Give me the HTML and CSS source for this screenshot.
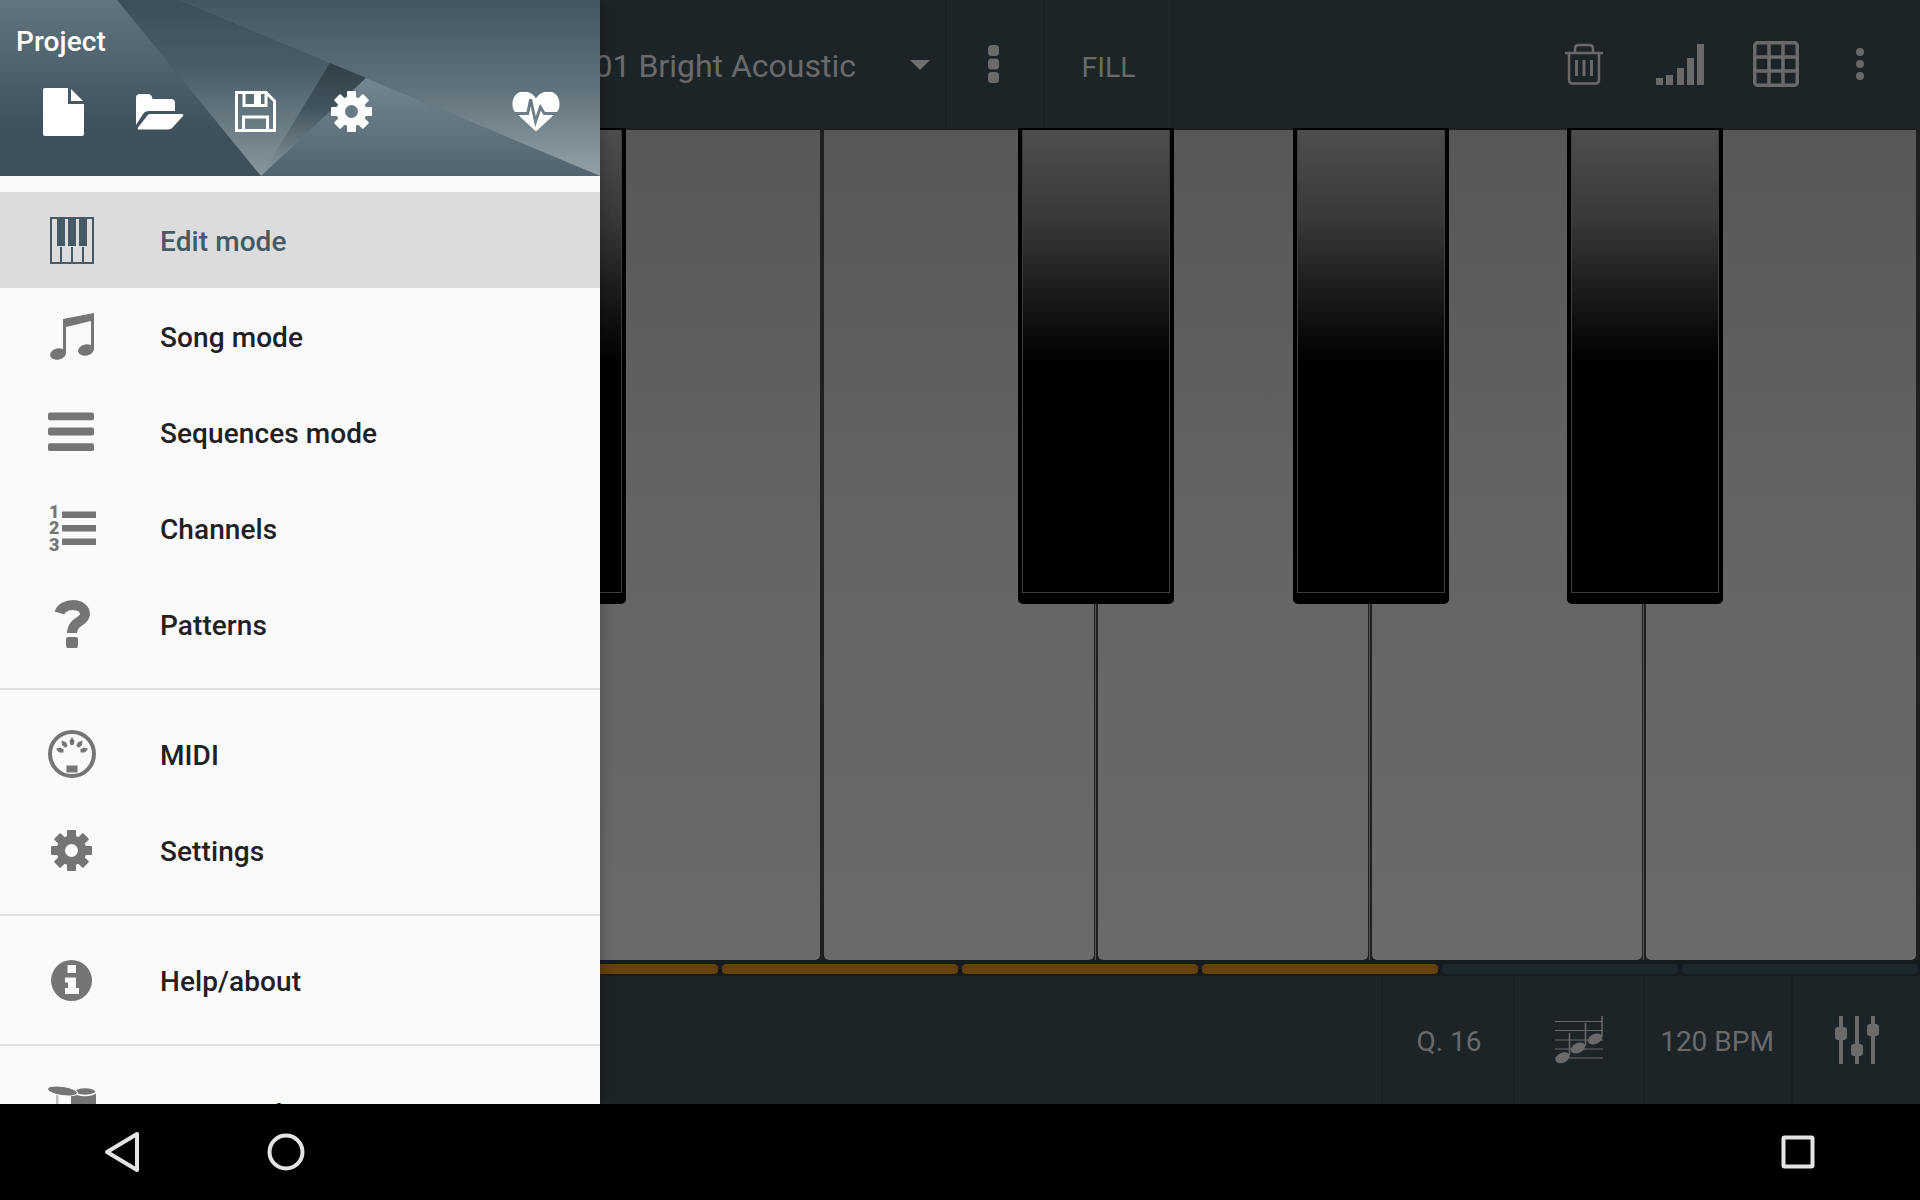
FILE: index.html
```html
<!DOCTYPE html>
<html lang="en">
<head>
<meta charset="utf-8">
<title>Project</title>
<link rel="stylesheet" href="styles.css">
</head>
<body>
<svg class="defs" width="0" height="0" aria-hidden="true">
  <defs>
    <symbol id="gear" viewBox="0 0 41 41">
      <circle cx="20.5" cy="20.5" r="10.75" fill="none" stroke="currentColor" stroke-width="8.5"/>
      <g fill="currentColor">
        <rect x="16" y="0" width="9" height="9" rx="1"/>
        <rect x="16" y="0" width="9" height="9" rx="1" transform="rotate(45 20.5 20.5)"/>
        <rect x="16" y="0" width="9" height="9" rx="1" transform="rotate(90 20.5 20.5)"/>
        <rect x="16" y="0" width="9" height="9" rx="1" transform="rotate(135 20.5 20.5)"/>
        <rect x="16" y="0" width="9" height="9" rx="1" transform="rotate(180 20.5 20.5)"/>
        <rect x="16" y="0" width="9" height="9" rx="1" transform="rotate(225 20.5 20.5)"/>
        <rect x="16" y="0" width="9" height="9" rx="1" transform="rotate(270 20.5 20.5)"/>
        <rect x="16" y="0" width="9" height="9" rx="1" transform="rotate(315 20.5 20.5)"/>
      </g>
    </symbol>
    <linearGradient id="gLeft" gradientUnits="userSpaceOnUse" x1="0" y1="0" x2="0" y2="176">
      <stop offset="0" stop-color="#62757f"/><stop offset=".72" stop-color="#3f515b"/><stop offset="1" stop-color="#3e505a"/>
    </linearGradient>
    <linearGradient id="gMid" gradientUnits="userSpaceOnUse" x1="0" y1="0" x2="0" y2="176">
      <stop offset="0" stop-color="#3c4f59"/><stop offset=".4" stop-color="#4b5e68"/><stop offset="1" stop-color="#87979e"/>
    </linearGradient>
    <linearGradient id="gTop" gradientUnits="userSpaceOnUse" x1="0" y1="0" x2="0" y2="176">
      <stop offset="0" stop-color="#43565f"/><stop offset=".5" stop-color="#5f717a"/><stop offset="1" stop-color="#93a2a9"/>
    </linearGradient>
    <linearGradient id="gWedge" gradientUnits="userSpaceOnUse" x1="0" y1="63" x2="0" y2="176">
      <stop offset="0" stop-color="#2f3f48"/><stop offset=".4" stop-color="#41535c"/><stop offset="1" stop-color="#8a9aa1"/>
    </linearGradient>
    <linearGradient id="gLow" gradientUnits="userSpaceOnUse" x1="0" y1="78" x2="0" y2="176">
      <stop offset="0" stop-color="#74868f"/><stop offset="1" stop-color="#51646e"/>
    </linearGradient>
    <mask id="pulse" maskUnits="userSpaceOnUse" x="0" y="0" width="49" height="41">
      <rect width="49" height="41" fill="#fff"/>
      <path d="M0 22.500H16L19 8 24 31 29 16 33 22.500H49" fill="none" stroke="#000" stroke-width="3"/>
    </mask>
  </defs>
</svg>

<div class="screen">
  <main class="app">
    <header class="bar topbar">
      <div class="instrument">
        <span class="instrument-name">01 Bright Acoustic</span>
        <span class="caret"></span>
      </div>
      <div class="cell cell-dots">
        <svg width="11" height="38" viewBox="0 0 11 38" fill="currentColor">
          <rect width="11" height="11" rx="3.500"/><rect y="13.500" width="11" height="11" rx="3.500"/><rect y="27" width="11" height="11" rx="3.500"/>
        </svg>
      </div>
      <div class="cell cell-fill">FILL</div>
      <div class="tools">
        <div class="tool">
          <svg width="38" height="42" viewBox="0 0 38 42" fill="none" stroke="currentColor" stroke-width="2.500">
            <path d="M0 10H38M10 10V6Q10 2 14 2H24Q28 2 28 6V10M4 10V37Q4 40.500 7.500 40.500H30.500Q34 40.500 34 37V10"/>
            <path d="M11.500 17V33M19 17V33M26.500 17V33" stroke-width="3"/>
          </svg>
        </div>
        <div class="tool">
          <svg width="48" height="41" viewBox="0 0 48 41" fill="currentColor">
            <rect x="0" y="34" width="7" height="7"/><rect x="10" y="31" width="7" height="10"/><rect x="21" y="24" width="7" height="17"/><rect x="31" y="14" width="7" height="27"/><rect x="41" y="0" width="7" height="41"/>
          </svg>
        </div>
        <div class="tool">
          <svg width="46" height="46" viewBox="0 0 46 46" fill="none" stroke="currentColor" stroke-width="3.500">
            <rect x="1.750" y="1.750" width="42.500" height="42.500" rx="3"/>
            <path d="M16 2V44M30 2V44M2 16H44M2 30H44"/>
          </svg>
        </div>
        <div class="tool tool-narrow">
          <svg width="8" height="32" viewBox="0 0 8 32" fill="currentColor">
            <circle cx="4" cy="4" r="4"/><circle cx="4" cy="16" r="4"/><circle cx="4" cy="28" r="4"/>
          </svg>
        </div>
      </div>
    </header>

    <section class="keyboard">
      <div class="key"></div>
      <div class="key"></div>
      <div class="key"></div>
      <div class="key"></div>
      <div class="key key-lined"></div>
      <div class="key key-lined"></div>
      <div class="key key-lined"></div>
      <div class="black black-2"><div class="black-face"></div></div>
      <div class="black black-4"><div class="black-face"></div></div>
      <div class="black black-5"><div class="black-face"></div></div>
      <div class="black black-6"><div class="black-face"></div></div>
    </section>

    <div class="progress">
      <span class="seg"></span><span class="seg"></span>
      <span class="seg seg-on"></span><span class="seg seg-on"></span><span class="seg seg-on"></span><span class="seg seg-on"></span>
      <span class="seg"></span><span class="seg"></span>
    </div>

    <footer class="bar bottombar">
      <div class="cell cell-q cell-text cell-first">Q. 16</div>
      <div class="cell cell-q">
        <svg width="48" height="48" viewBox="0 0 48 48" fill="currentColor">
          <path d="M0 5.500H48M0 14.500H48M0 24H48M0 33H48M0 42H48" stroke="currentColor" stroke-width="1" fill="none"/>
          <ellipse cx="7.500" cy="41.700" rx="7.500" ry="5" transform="rotate(-25 7.500 41.700)"/>
          <ellipse cx="23" cy="32" rx="7.500" ry="5" transform="rotate(-25 23 32)"/>
          <ellipse cx="40" cy="23" rx="7.500" ry="5" transform="rotate(-25 40 23)"/>
          <path d="M14.500 17V39M30.500 7V30M47 0V21" stroke="currentColor" stroke-width="1.500" fill="none"/>
        </svg>
      </div>
      <div class="cell cell-bpm cell-text">120 BPM</div>
      <div class="cell cell-mix">
        <svg width="44" height="48" viewBox="0 0 44 48" fill="currentColor">
          <rect x="4" width="4" height="48"/><rect x="20" width="4" height="48"/><rect x="36" width="4" height="48"/>
          <rect x="0" y="11" width="12" height="13" rx="3"/><rect x="16" y="28" width="12" height="12" rx="3"/><rect x="32" y="8" width="12" height="12" rx="3"/>
        </svg>
      </div>
    </footer>
  </main>

  <nav class="navbar">
    <div class="nav-btn">
      <svg width="36" height="42" viewBox="0 0 36 42" fill="none" stroke="#e4e4e4" stroke-width="4" stroke-linejoin="round">
        <path d="M33 3V39L3 21Z"/>
      </svg>
    </div>
    <div class="nav-btn">
      <svg width="40" height="40" viewBox="0 0 40 40" fill="none" stroke="#e4e4e4" stroke-width="4">
        <circle cx="20" cy="20" r="16.500"/>
      </svg>
    </div>
    <div class="nav-btn nav-btn-end">
      <svg width="34" height="34" viewBox="0 0 34 34" fill="none" stroke="#e4e4e4" stroke-width="4" stroke-linejoin="round">
        <rect x="2.500" y="2.500" width="29" height="29" rx="1"/>
      </svg>
    </div>
  </nav>

  <aside class="drawer">
    <div class="drawer-head">
      <svg class="drawer-art" width="600" height="176" viewBox="0 0 600 176">
        <rect width="600" height="176" fill="url(#gLeft)"/>
        <path d="M117 0H180L600 176H261Z" fill="url(#gMid)"/>
        <path d="M180 0H600V176Z" fill="url(#gTop)"/>
        <path d="M330 63L366 78 261 176Z" fill="url(#gWedge)"/>
        <path d="M366 78L600 176H261Z" fill="url(#gLow)"/>
      </svg>
      <div class="drawer-title">Project</div>
      <div class="drawer-actions">
        <div class="action">
          <svg width="41" height="48" viewBox="0 0 41 48" fill="#fff">
            <path d="M2 0H25V16H41V46Q41 48 39 48H2Q0 48 0 46V2Q0 0 2 0Z"/><path d="M28 1L40 13H28Z"/>
          </svg>
        </div>
        <div class="action action-folder">
          <svg width="48" height="36" viewBox="0 0 48 36" fill="#fff">
            <path d="M0 4Q0 0 4 0H12Q15 0 16 3L16.500 5H35Q39 5 39 9V17H13Q9 17 7 20L0 31Z"/>
            <path d="M14 20H46Q48 20 47 22L37 33Q35 35.600 32 35.600H3Q1 35.600 2 33.600L11 22Q12 20 14 20Z"/>
          </svg>
        </div>
        <div class="action">
          <svg class="icon-raise" width="41" height="41" viewBox="0 0 41 41" fill="none" stroke="#fff" stroke-width="3">
            <path d="M1.500 1.500H31L39.500 10V39.500H1.500Z"/>
            <path d="M9 2V14.500H31V2"/>
            <path d="M8.500 39V26H32.500V39"/>
            <rect x="19" y="3" width="7" height="10" fill="#fff" stroke="none"/>
          </svg>
        </div>
        <div class="action"><svg class="gear-white icon-raise" width="41" height="41"><use href="#gear"/></svg></div>
        <div class="action action-end">
          <svg class="icon-raise" width="49" height="41" viewBox="0 0 49 41" fill="#fff">
            <path mask="url(#pulse)" d="M24.500 41L3 21C-2 15 0 0 12 0 18 0 22 3 24.500 7 27 3 31 0 37 0 49 0 51 15 46 21Z"/>
          </svg>
        </div>
      </div>
    </div>

    <div class="menu-group">
      <div class="menu-row menu-row-active">
        <span class="menu-icon">
          <svg width="44" height="47" viewBox="0 0 44 47" fill="none" stroke="currentColor" stroke-width="2">
            <rect x="1" y="1" width="42" height="45"/>
            <path d="M11 30V46M22 30V46M33 30V46"/>
            <path d="M7 1H15V29H7ZM18 1H26V29H18ZM29 1H37V29H29Z" fill="currentColor" stroke="none"/>
          </svg>
        </span>
        <span class="menu-label">Edit mode</span>
      </div>
      <div class="menu-row">
        <span class="menu-icon">
          <svg width="44" height="47" viewBox="0 0 44 47" fill="currentColor">
            <path d="M13 6L44 0V37H41V8L16 14V41H13Z"/>
            <ellipse cx="8" cy="41" rx="8" ry="5.500" transform="rotate(-12 8 41)"/>
            <ellipse cx="36" cy="37" rx="8" ry="5.500" transform="rotate(-12 36 37)"/>
          </svg>
        </span>
        <span class="menu-label">Song mode</span>
      </div>
      <div class="menu-row">
        <span class="menu-icon">
          <svg class="icon-nudge" width="47" height="40" viewBox="0 0 47 40" fill="currentColor">
            <rect width="47" height="8" rx="2"/><rect y="15.500" width="47" height="8" rx="2"/><rect y="31.500" width="47" height="8" rx="2"/>
          </svg>
        </span>
        <span class="menu-label">Sequences mode</span>
      </div>
      <div class="menu-row">
        <span class="menu-icon">
          <svg class="icon-channels" width="48" height="48" viewBox="0 0 48 48" fill="currentColor">
            <text x="1" y="14">1</text><text x="1" y="30">2</text><text x="1" y="47">3</text>
            <rect x="14" y="7.500" width="34" height="6.500"/><rect x="14" y="21" width="34" height="6.500"/><rect x="14" y="34.500" width="34" height="6.500"/>
          </svg>
        </span>
        <span class="menu-label">Channels</span>
      </div>
      <div class="menu-row">
        <span class="menu-icon">
          <svg width="48" height="48" viewBox="0 0 48 48" fill="currentColor">
            <path d="M11.500 13C13 8 19 5 25 5 32 5 37 9 37 14 37 20 30 21 27 25 25 27.500 24 29 24 33" fill="none" stroke="currentColor" stroke-width="10"/>
            <rect x="18" y="37" width="12" height="11" rx="2"/>
          </svg>
        </span>
        <span class="menu-label">Patterns</span>
      </div>
    </div>

    <div class="menu-group">
      <div class="menu-row">
        <span class="menu-icon">
          <svg width="48" height="48" viewBox="0 0 48 48" fill="currentColor">
            <circle cx="24" cy="24" r="22" fill="none" stroke="currentColor" stroke-width="4"/>
            <rect x="18.500" y="35.500" width="11" height="7"/>
            <path d="M24 7L26.500 11 25.500 15H22.500L21.500 11Z"/>
            <path d="M24 7L26.500 11 25.500 15H22.500L21.500 11Z" transform="rotate(-38 24 24)"/>
            <path d="M24 7L26.500 11 25.500 15H22.500L21.500 11Z" transform="rotate(38 24 24)"/>
            <path d="M24 7L26.500 11 25.500 15H22.500L21.500 11Z" transform="rotate(-72 24 24)"/>
            <path d="M24 7L26.500 11 25.500 15H22.500L21.500 11Z" transform="rotate(72 24 24)"/>
          </svg>
        </span>
        <span class="menu-label">MIDI</span>
      </div>
      <div class="menu-row">
        <span class="menu-icon"><svg class="gear-grey icon-nudge" width="41" height="41"><use href="#gear"/></svg></span>
        <span class="menu-label">Settings</span>
      </div>
    </div>

    <div class="menu-group">
      <div class="menu-row">
        <span class="menu-icon">
          <svg class="icon-nudge" width="41" height="41" viewBox="0 0 41 41">
            <circle cx="20.500" cy="20.500" r="20.500" fill="currentColor"/>
            <path d="M16.500 5H25V13H16.500ZM14 17.500H25V28H28V34H14V28H17V22.500H14Z" fill="#fafafa"/>
          </svg>
        </span>
        <span class="menu-label">Help/about</span>
      </div>
    </div>

    <div class="menu-group menu-group-last">
      <div class="menu-row">
        <span class="menu-icon">
          <svg width="48" height="48" viewBox="0 0 48 48" fill="currentColor">
            <rect x="8" y="8" width="2.500" height="40" fill="#bdbdbd"/>
            <path d="M23 10V48H48V6H23Z"/>
            <ellipse cx="37" cy="5.500" rx="11" ry="4" stroke="#fafafa" stroke-width="1.500"/>
            <ellipse cx="14.500" cy="5" rx="15" ry="4.500" transform="rotate(8 14.500 5)" stroke="#fafafa" stroke-width="1"/>
          </svg>
        </span>
        <span class="menu-label">Drum pads</span>
      </div>
    </div>
  </aside>
</div>
</body>
</html>
```

FILE: styles.css
```css
* { box-sizing: border-box; }

html, body {
  margin: 0;
  padding: 0;
  background: #000;
}

body {
  font-family: Roboto, "Liberation Sans", sans-serif;
}

.defs {
  position: absolute;
}

.screen {
  position: relative;
  width: 1920px;
  height: 1200px;
  overflow: hidden;
  display: flex;
  flex-direction: column;
}

.app {
  height: 1104px;
  display: flex;
  flex-direction: column;
  background: #1c2428;
}

.bar {
  display: flex;
  height: 128px;
  flex: none;
  color: #6a6a6a;
  background: #1c2428;
}

.cell {
  display: flex;
  align-items: center;
  justify-content: center;
  height: 100%;
  border-left: 2px solid #192024;
}

/* top bar */
.instrument {
  width: 945px;
  flex: none;
  display: flex;
  align-items: center;
  justify-content: flex-end;
  padding-right: 15px;
  gap: 54px;
}

.instrument-name {
  font-size: 32px;
  line-height: 40px;
  padding-top: 4px;
  white-space: nowrap;
  color: #6a6a6a;
}

.caret {
  width: 0;
  height: 0;
  margin-top: 2px;
  border-left: 10px solid transparent;
  border-right: 10px solid transparent;
  border-top: 10px solid #6f6f6f;
}

.cell-dots {
  width: 98px;
  padding-right: 4px;
}

.cell-fill {
  width: 131px;
  font-size: 28.5px;
  padding-top: 7px;
  border-right: 2px solid #192024;
}

.tools {
  margin-left: auto;
  display: flex;
  padding-right: 24px;
}

.tool {
  width: 96px;
  display: flex;
  align-items: center;
  justify-content: center;
}

.tool-narrow {
  width: 72px;
}

/* keyboard */
.keyboard {
  position: relative;
  height: 832px;
  flex: none;
  display: grid;
  grid-template-columns: repeat(7, 274px);
  padding: 2px 0 0;
  background: #1f1f1f;
}

.key {
  position: relative;
  margin: 0 2px;
  border-radius: 0 0 5px 5px;
  background: linear-gradient(#575757, #656565 50%, #6a6a6a);
}

.key-lined::before {
  content: "";
  position: absolute;
  top: 0;
  bottom: 0;
  left: -3px;
  width: 1px;
  background: #555;
}

.black {
  position: absolute;
  top: 0;
  width: 156px;
  height: 476px;
  padding: 2px 4px 11px;
  background: #000;
  border-radius: 0 0 5px 5px;
}

.black-face {
  height: 100%;
  border: 1px solid #3c3c3c;
  border-top: 0;
  background: linear-gradient(#4e4e4e, #383838 90px, #141414 180px, #000 235px);
}

.black-2 { left: 470px; }
.black-4 { left: 1018px; }
.black-5 { left: 1293px; }
.black-6 { left: 1567px; }

/* progress */
.progress {
  height: 16px;
  flex: none;
  display: grid;
  grid-template-columns: repeat(8, 240px);
  padding: 4px 0 2px;
  background: #151c20;
}

.seg {
  margin: 0 2px;
  border-radius: 4px;
  background: #1c272d;
}

.seg-on {
  background: #66420a;
}

/* bottom bar */
.bottombar {
  justify-content: flex-end;
}

.cell-text {
  font-size: 28px;
  padding-top: 2px;
}

.cell-q {
  width: 130px;
}

.cell-first {
  width: 132px;
  padding-left: 2px;
}

.cell-bpm {
  width: 148px;
  padding-right: 2px;
}

.cell-mix {
  width: 129px;
}

/* system nav */
.navbar {
  height: 96px;
  flex: none;
  display: flex;
  padding: 0 40px;
  background: #000;
}

.nav-btn {
  width: 164px;
  display: flex;
  align-items: center;
  justify-content: center;
}

.nav-btn-end {
  margin-left: auto;
}

/* drawer */
.drawer {
  position: absolute;
  top: 0;
  left: 0;
  width: 600px;
  height: 1104px;
  overflow: hidden;
  background: #fafafa;
  box-shadow: 0 0 14px rgba(0, 0, 0, 0.3);
}

.drawer-head {
  position: relative;
  height: 176px;
  margin-bottom: 16px;
  padding-top: 24px;
}

.drawer-art {
  position: absolute;
  top: 0;
  left: 0;
}

.drawer-title {
  position: relative;
  padding-left: 16px;
  font-size: 28px;
  font-weight: 500;
  line-height: 36px;
  letter-spacing: 0.1px;
  color: #fff;
}

.drawer-actions {
  position: relative;
  display: flex;
  height: 48px;
  margin-top: 28px;
  padding: 0 40px 0 15px;
}

.action {
  width: 96px;
  display: flex;
  align-items: center;
  justify-content: center;
}

.action-folder {
  padding-left: 2px;
}

.action-end {
  width: 48px;
  margin-left: auto;
}

.icon-raise {
  margin-bottom: 2px;
}

.gear-white { color: #fff; }
.gear-grey { color: #757575; }

.icon-nudge {
  margin-right: 2px;
}

.menu-group {
  padding-bottom: 16px;
  margin-bottom: 16px;
  border-bottom: 2px solid #e0e0e0;
}

.menu-group-last {
  border-bottom: 0;
}

.menu-row {
  display: flex;
  align-items: center;
  height: 96px;
  color: #757575;
}

.menu-row-active {
  background: #dcdcdc;
  color: #455a64;
}

.menu-icon {
  width: 48px;
  height: 48px;
  margin-left: 48px;
  margin-right: 64px;
  display: flex;
  align-items: center;
  justify-content: center;
}

.menu-label {
  font-size: 28px;
  font-weight: 500;
  line-height: 36px;
  letter-spacing: 0.08px;
  padding-top: 3px;
  color: #212121;
}

.menu-group-last .menu-label {
  padding-top: 9px;
}

.menu-row-active .menu-label {
  color: #455a64;
}

.icon-channels {
  overflow: visible;
}

.icon-channels text {
  font-family: Roboto, sans-serif;
  font-size: 18px;
  font-weight: 900;
}
```
